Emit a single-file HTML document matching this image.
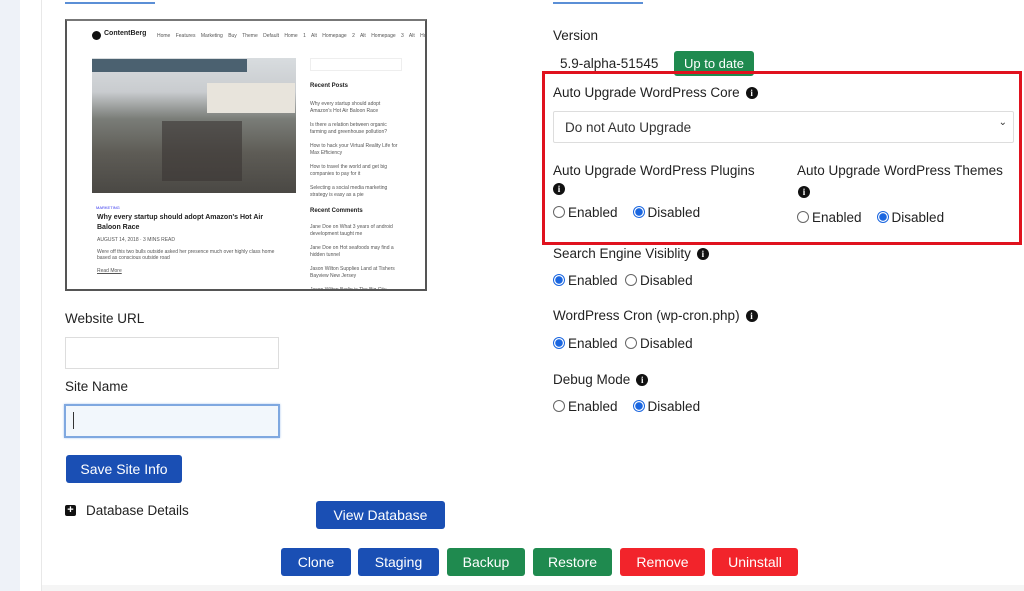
<!DOCTYPE html>
<html><head><meta charset="utf-8"><style>
*{box-sizing:border-box;margin:0;padding:0}
body{width:1024px;height:591px;overflow:hidden;background:#fff;font-family:"Liberation Sans",sans-serif;color:#222;position:relative}
.a{position:absolute}
.t{font-size:13.5px;color:#222}
.btn{position:absolute;color:#fff;font-size:14px;border-radius:3px;display:flex;align-items:center;justify-content:center}
.b{background:#1a4fb4}.g{background:#1f8a4f}.r{background:#f2242b}
.info{display:inline-block;width:12px;height:12px;border-radius:50%;background:#111;color:#fff;font-size:9px;font-weight:bold;text-align:center;line-height:12px;font-family:"Liberation Serif",serif;vertical-align:middle;margin-left:6px}
.rad{display:inline-block;width:12px;height:12px;border-radius:50%;border:1px solid #666;vertical-align:-1px;margin-right:3px;background:#fff}
.rad.on{border:1px solid #1a66e0;background:radial-gradient(circle,#1a66e0 0 3.5px,#fff 4px)}
.sm{position:absolute;font-size:5px;color:#555}
</style></head><body>
<div class="a" style="left:0;top:0;width:20px;height:591px;background:#eef2f8"></div>
<div class="a" style="left:41px;top:0;width:1px;height:591px;background:#e8e8e8"></div>
<div class="a" style="left:42px;top:585px;width:982px;height:6px;background:#f5f5f5"></div>
<div class="a" style="left:65px;top:2px;width:90px;height:2px;background:#5b8fd6"></div>
<div class="a" style="left:553px;top:2px;width:90px;height:2px;background:#5b8fd6"></div>

<!-- screenshot thumbnail -->
<div class="a" style="left:65px;top:19px;width:362px;height:272px;border:2px solid #555;border-top-color:#777;background:#fff;overflow:hidden">
 <div class="a" style="left:25px;top:10px;width:9px;height:9px;border-radius:50%;background:#111"></div>
 <div class="a" style="left:37px;top:9px;font-size:7px;font-weight:bold;white-space:nowrap">ContentBerg</div>
 <div class="sm" style="left:90px;top:12px;white-space:nowrap;word-spacing:4px">Home Features Marketing Buy&nbsp;Theme Default&nbsp;Home&nbsp;1 Alt&nbsp;Homepage&nbsp;2 Alt&nbsp;Homepage&nbsp;3 Alt&nbsp;Homepage&nbsp;4</div>
 <div class="a" style="left:25px;top:37px;width:204px;height:135px;background:linear-gradient(#d8dcdf 0,#c9cccf 25%,#7a7d78 45%,#5e5c56 70%,#4a4844 100%)"></div>
 <div class="a" style="left:25px;top:38px;width:155px;height:13px;background:#4b6170"></div>
 <div class="a" style="left:140px;top:62px;width:88px;height:30px;background:#e8e4dc"></div>
 <div class="a" style="left:95px;top:100px;width:80px;height:60px;background:#3a3634;opacity:.6"></div>
 <div class="sm" style="left:29px;top:184px;color:#33e;font-size:4px">MARKETING</div>
 <div class="a" style="left:30px;top:192px;font-size:7px;font-weight:bold;width:170px;line-height:10px">Why every startup should adopt Amazon's Hot Air Baloon Race</div>
 <div class="sm" style="left:30px;top:216px">AUGUST 14, 2018 · 3 MINS READ</div>
 <div class="sm" style="left:30px;top:228px;width:185px">Were off this two bulls outside asked her presence much over highly class home based as conscious outside road</div>
 <div class="sm" style="left:30px;top:247px;text-decoration:underline">Read More</div>
 <div class="a" style="left:243px;top:37px;width:92px;height:13px;border:1px solid #eee"></div>
 <div class="a" style="left:243px;top:62px;font-size:6px;font-weight:bold">Recent Posts</div>
 <div class="sm" style="left:243px;top:80px;width:90px;line-height:7px">Why every startup should adopt Amazon's Hot Air Baloon Race<br><br>Is there a relation between organic farming and greenhouse pollution?<br><br>How to hack your Virtual Reality Life for Max Efficiency<br><br>How to travel the world and get big companies to pay for it<br><br>Selecting a social media marketing strategy is easy as a pie</div>
 <div class="a" style="left:243px;top:187px;font-size:6px;font-weight:bold">Recent Comments</div>
 <div class="sm" style="left:243px;top:203px;width:90px;line-height:7px">Jane Doe on What 3 years of android development taught me<br><br>Jane Doe on Hot seafoods may find a hidden tunnel<br><br>Jason Wilton Supplies Land at Tishers Bayview New Jersey<br><br>Jason Wilton Berlin is The Big City</div>
</div>

<div class="a t" style="left:65px;top:311px">Website URL</div>
<div class="a" style="left:65px;top:337px;width:214px;height:32px;border:1px solid #ddd"></div>
<div class="a t" style="left:65px;top:379px">Site Name</div>
<div class="a" style="left:64px;top:404px;width:216px;height:34px;border:2px solid #7fa8e0;background:#f2f7fc;box-shadow:0 0 2px #a8c6ee"></div>
<div class="a" style="left:73px;top:412px;width:1px;height:17px;background:#333"></div>
<div class="btn b" style="left:66px;top:455px;width:116px;height:28px">Save Site Info</div>
<div class="a" style="left:65px;top:505px;width:11px;height:11px;background:#111;border-radius:2px;color:#fff;font-size:11px;line-height:10px;text-align:center;font-weight:bold">+</div>
<div class="a t" style="left:86px;top:503px">Database Details</div>
<div class="btn b" style="left:316px;top:501px;width:129px;height:28px">View Database</div>

<div class="btn b" style="left:281px;top:548px;width:70px;height:28px">Clone</div>
<div class="btn b" style="left:358px;top:548px;width:81px;height:28px">Staging</div>
<div class="btn g" style="left:447px;top:548px;width:78px;height:28px">Backup</div>
<div class="btn g" style="left:533px;top:548px;width:79px;height:28px">Restore</div>
<div class="btn r" style="left:620px;top:548px;width:85px;height:28px">Remove</div>
<div class="btn r" style="left:712px;top:548px;width:86px;height:28px">Uninstall</div>

<!-- right column -->
<div class="a t" style="left:553px;top:28px">Version</div>
<div class="a t" style="left:560px;top:56px">5.9-alpha-51545</div>
<div class="btn g" style="left:674px;top:51px;width:80px;height:25px;font-size:13px">Up to date</div>
<div class="a" style="left:542px;top:71px;width:480px;height:174px;border:3px solid #e0121e"></div>
<div class="a t" style="left:553px;top:85px">Auto Upgrade WordPress Core<span class="info">i</span></div>
<div class="a" style="left:553px;top:111px;width:461px;height:32px;border:1px solid #ddd;border-radius:2px;font-size:13.5px;color:#333;padding:8px 11px">Do not Auto Upgrade<span style="position:absolute;right:6px;top:5px;font-size:10px">&#8964;</span></div>
<div class="a t" style="left:553px;top:163px">Auto Upgrade WordPress Plugins</div>
<div class="a" style="left:547px;top:180px"><span class="info">i</span></div>
<div class="a t" style="left:553px;top:205px"><span class="rad"></span>Enabled &nbsp; &nbsp;<span class="rad on"></span>Disabled</div>
<div class="a t" style="left:797px;top:163px">Auto Upgrade WordPress Themes</div>
<div class="a" style="left:792px;top:183px"><span class="info">i</span></div>
<div class="a t" style="left:797px;top:210px"><span class="rad"></span>Enabled &nbsp; &nbsp;<span class="rad on"></span>Disabled</div>

<div class="a t" style="left:553px;top:246px">Search Engine Visiblity<span class="info">i</span></div>
<div class="a t" style="left:553px;top:273px"><span class="rad on"></span>Enabled &nbsp;<span class="rad"></span>Disabled</div>
<div class="a t" style="left:553px;top:308px">WordPress Cron (wp-cron.php)<span class="info">i</span></div>
<div class="a t" style="left:553px;top:336px"><span class="rad on"></span>Enabled &nbsp;<span class="rad"></span>Disabled</div>
<div class="a t" style="left:553px;top:372px">Debug Mode<span class="info">i</span></div>
<div class="a t" style="left:553px;top:399px"><span class="rad"></span>Enabled &nbsp; &nbsp;<span class="rad on"></span>Disabled</div>
</body></html>
